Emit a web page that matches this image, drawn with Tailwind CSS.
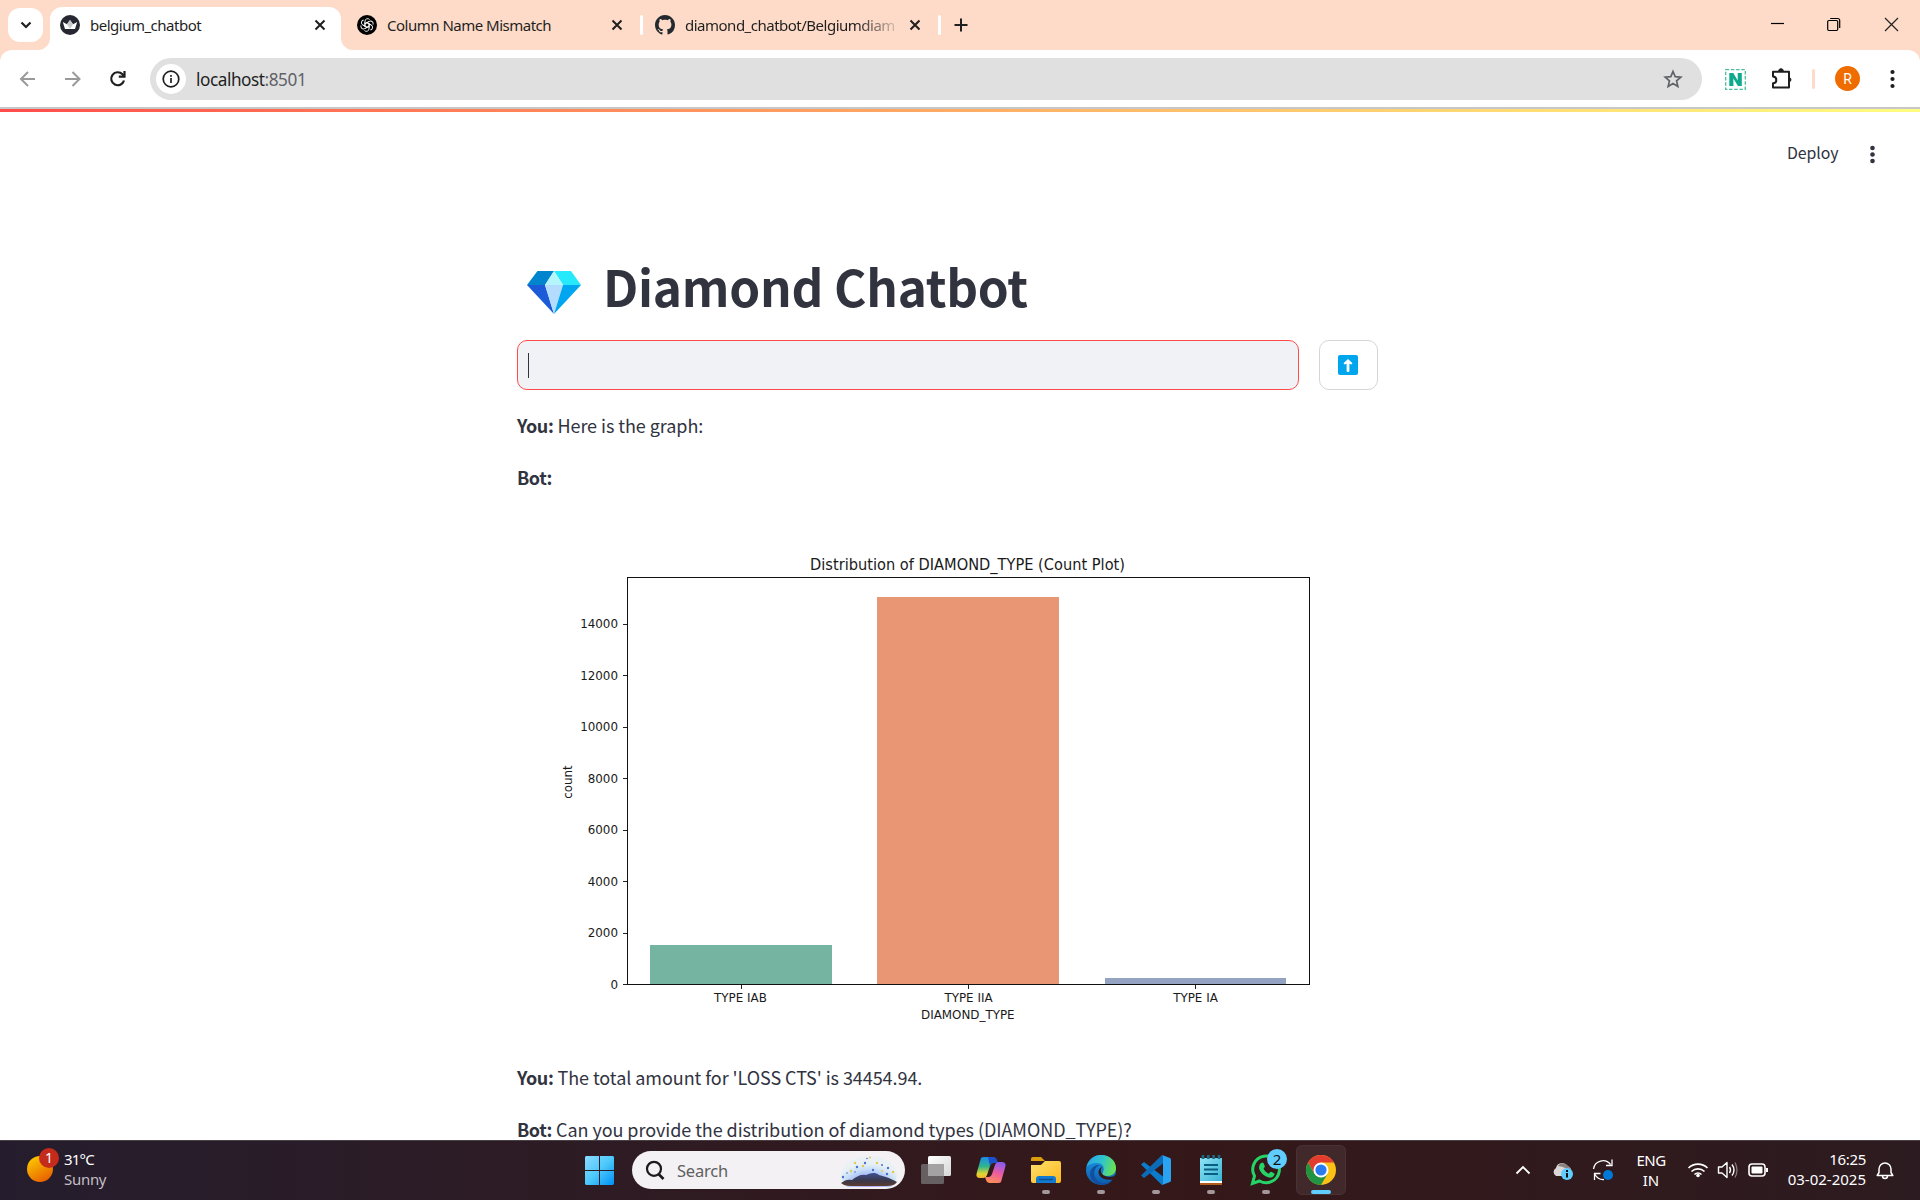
<!DOCTYPE html>
<html lang="en">
<head>
<meta charset="utf-8">
<title>belgium_chatbot</title>
<script src="https://cdn.jsdelivr.net/npm/@tailwindcss/browser@4"></script>
</head>
<body class="flex h-[1200px] w-[1920px] flex-col overflow-hidden bg-white font-['Noto_Sans',sans-serif] text-[#1f1f1f]">

<!-- Tab strip -->
<header class="flex h-[50px] shrink-0 items-start bg-[#fddbc8]">
  <button class="mt-2 ml-2 flex h-[34px] w-[35px] items-center justify-center rounded-[12px] bg-white">
    <svg class="h-4 w-4" viewBox="0 0 16 16" fill="none" stroke="#1f1f1f" stroke-width="2.2"><path d="M3.5 5.5 8 10l4.5-4.5"/></svg>
  </button>
  <div class="relative mt-[7px] ml-[7px] flex h-[43px] w-[291px] items-start rounded-t-[12px] bg-white pt-2 pl-[10px]">
    <svg class="absolute bottom-0 -left-3 h-3 w-3" viewBox="0 0 12 12"><path d="M12 0v12H0A12 12 0 0 0 12 0" fill="#fff"/></svg>
    <svg class="absolute -right-3 bottom-0 h-3 w-3" viewBox="0 0 12 12"><path d="M0 0v12h12A12 12 0 0 1 0 0" fill="#fff"/></svg>
    <svg class="h-5 w-5 shrink-0" viewBox="0 0 20 20"><circle cx="10" cy="10" r="10" fill="#262730"/><path d="M2.800 7 7 9.200 10 5l3 4.200L17.200 7l-2.200 7H5z" fill="#fff"/><path d="M10 5l3 4.200-3 4.600-3-4.600z" fill="#c9c9cd"/></svg>
    <span class="ml-[10px] w-[224px] text-[15px] leading-[20px] whitespace-nowrap"><span class="tracking-[-0.5px]">belgium_chatbot</span></span>
    <svg class="mt-[4px] h-3 w-3 shrink-0" viewBox="0 0 12 12" stroke="#1f1f1f" stroke-width="2"><path d="m1.500 1.500 9 9m0-9-9 9"/></svg>
  </div>
  <div class="mt-[15px] flex w-[300px] items-start pl-4">
    <svg class="h-5 w-5 shrink-0" viewBox="0 0 20 20"><circle cx="10" cy="10" r="10" fill="#000"/><g fill="none" stroke="#fff" stroke-width=".9"><path id="petal" d="M8 11.800V6.200a2.600 2.600 0 0 1 4.600-1.600M8 8.800l3.800-2.200"/><use href="#petal" transform="rotate(60 10 10)"/><use href="#petal" transform="rotate(120 10 10)"/><use href="#petal" transform="rotate(180 10 10)"/><use href="#petal" transform="rotate(240 10 10)"/><use href="#petal" transform="rotate(300 10 10)"/></g></svg>
    <span class="ml-[10px] w-[224px] text-[15px] leading-[20px] whitespace-nowrap"><span class="tracking-[-0.5px]">Column Name Mismatch</span></span>
    <svg class="mt-1 h-3 w-3 shrink-0" viewBox="0 0 12 12" stroke="#1f1f1f" stroke-width="2"><path d="m1.500 1.500 9 9m0-9-9 9"/></svg>
  </div>
  <div class="mt-[15px] -ml-[1px] h-5 w-[3px] rounded bg-white"></div>
  <div class="mt-[15px] flex w-[295px] items-start pl-[12px]">
    <svg class="h-5 w-5 shrink-0" viewBox="0 0 16 16" fill="#24292f"><path d="M8 0C3.580 0 0 3.580 0 8c0 3.540 2.290 6.530 5.470 7.590.4.070.55-.17.55-.38 0-.19-.01-.82-.01-1.490-2.010.37-2.530-.49-2.690-.94-.09-.23-.48-.94-.82-1.130-.28-.15-.68-.52-.01-.53.63-.01 1.080.58 1.230.82.72 1.210 1.870.87 2.330.66.07-.52.28-.87.51-1.070-1.780-.2-3.640-.89-3.640-3.950 0-.87.31-1.590.82-2.150-.08-.2-.36-1.020.08-2.120 0 0 .67-.21 2.200.82.64-.18 1.320-.27 2-.27s1.360.09 2 .27c1.530-1.040 2.200-.82 2.200-.82.44 1.100.16 1.920.08 2.120.51.56.82 1.270.82 2.150 0 3.070-1.870 3.750-3.650 3.950.29.25.54.73.54 1.480 0 1.070-.01 1.930-.01 2.200 0 .21.15.46.55.38A8.010 8.010 0 0 0 16 8c0-4.420-3.580-8-8-8"/></svg>
    <span class="mr-[15px] ml-[10px] w-[209px] bg-linear-to-r from-[#1f1f1f] from-82% to-[#1f1f1f]/20 bg-clip-text text-[15px] leading-[20px] whitespace-nowrap text-transparent"><span class="tracking-[-0.5px]">diamond_chatbot/Belgiumdiam</span></span>
    <svg class="mt-1 h-3 w-3 shrink-0" viewBox="0 0 12 12" stroke="#1f1f1f" stroke-width="2"><path d="m1.500 1.500 9 9m0-9-9 9"/></svg>
  </div>
  <div class="mt-[15px] h-5 w-[3px] rounded bg-white"></div>
  <svg class="mt-[18px] ml-[13px] h-[14px] w-[14px]" viewBox="0 0 14 14" stroke="#1f1f1f" stroke-width="2"><path d="M7 .5v13M.5 7h13"/></svg>
  <div class="mt-[17px] mr-[21px] ml-auto flex gap-[42px]">
    <svg class="h-[15px] w-[15px]" viewBox="0 0 15 15" stroke="#000" stroke-width="1.200"><path d="M1 6.500h13"/></svg>
    <svg class="h-[15px] w-[15px]" viewBox="0 0 15 15" fill="none" stroke="#000" stroke-width="1.200"><rect x=".7" y="3.500" width="10" height="10" rx="1.200"/><path d="M3.200 1.500h7.500a2 2 0 0 1 2 2V11"/></svg>
    <svg class="h-[15px] w-[15px]" viewBox="0 0 15 15" stroke="#222" stroke-width="1.200"><path d="m1 1 13 13m0-13L1 14"/></svg>
  </div>
</header>

<!-- Toolbar -->
<nav class="h-[57px] shrink-0 bg-[#fddbc8]">
  <div class="flex h-full items-start rounded-t-[12px] bg-white pt-2 pl-[18px]">
    <svg class="mt-[11px] h-5 w-5" viewBox="0 0 20 20" fill="none" stroke="#9a9a9a" stroke-width="2"><path d="M17 10H3M10 3l-7 7 7 7"/></svg>
    <svg class="mt-[11px] ml-6 h-5 w-5" viewBox="0 0 20 20" fill="none" stroke="#9a9a9a" stroke-width="2"><path d="M3 10h14.500M10.500 3l7 7-7 7"/></svg>
    <svg class="mt-[11px] ml-[26px] h-5 w-5" viewBox="0 0 20 20" fill="none" stroke="#1f1f1f" stroke-width="2.200"><path d="M16 11.500A6.500 6.500 0 1 1 14.500 5.300l1.500 1.700"/><path d="M16.500 2v5.700h-5.700"/></svg>
    <div class="ml-[22px] flex h-[42px] w-[1552px] items-start rounded-full bg-[#e0e0e0] pl-[6px]">
      <div class="mt-[6px] flex h-[30px] w-[30px] items-center justify-center rounded-full bg-white">
        <svg class="h-[18px] w-[18px]" viewBox="0 0 18 18" fill="none" stroke="#1f1f1f" stroke-width="1.700"><circle cx="9" cy="9" r="7.800"/><path d="M9 8v5M9 5v1.800"/></svg>
      </div>
      <span class="mt-[10px] ml-[10px] text-[17.200px] leading-6 whitespace-nowrap"><span class="tracking-[-0.45px]">localhost<span class="text-[#5f6368]">:8501</span></span></span>
      <svg class="mt-[11px] mr-[19px] ml-auto h-5 w-5" viewBox="0 0 20 20" fill="none" stroke="#5f6368" stroke-width="1.700"><path d="m10 2.500 2.200 5.200 5.600.5-4.250 3.700 1.300 5.500L10 14.500l-4.850 2.900 1.300-5.500L2.200 8.200l5.600-.5z"/></svg>
    </div>
    <svg class="mt-[11px] ml-[23px] h-[21px] w-[21px]" viewBox="0 0 21 21"><rect x=".7" y=".7" width="19.600" height="19.600" fill="none" stroke="#4dbd9f" stroke-width="1.300" stroke-dasharray="3.500 1.700"/><path d="M4.300 17V4h4l4.400 7.500V4h4.100v13h-3.900L8.400 9.500V17z" fill="#0fa98c"/></svg>
    <svg class="mt-[9px] ml-[25px] h-[23px] w-[22px]" viewBox="0 0 22 23" fill="none" stroke="#1f1f1f" stroke-width="2"><path d="M2 4.800h16v15.800H2v-4.300c2.500 0 3.300-1.500 3.300-3.300S4.500 9.500 2 9.500z" stroke-linejoin="round"/><path d="M7.700 4a2.300 2.300 0 0 1 4.600 0zM18.300 10.500a2.300 2.300 0 0 1 0 4.400z" fill="#1f1f1f" stroke-width="1"/></svg>
    <div class="mt-[11px] ml-[19px] h-5 w-[3px] rounded bg-[#fddbc8]"></div>
    <div class="mt-2 ml-5 flex h-[25px] w-[25px] items-center justify-center rounded-full bg-[#ef6c00] font-['Roboto',sans-serif] text-[14px] leading-none text-white">R</div>
    <svg class="mt-[11px] ml-[29px] h-5 w-[7px]" viewBox="0 0 7 20" fill="#1f1f1f"><circle cx="3.500" cy="3" r="2.100"/><circle cx="3.500" cy="10" r="2.100"/><circle cx="3.500" cy="17" r="2.100"/></svg>
  </div>
</nav>
<div class="h-[2px] shrink-0 bg-[#c7c7c7]"></div>

<!-- App -->
<div class="h-[3px] shrink-0 bg-linear-to-r from-[#ff4b4b] to-[#fffd80]"></div>
<main class="h-[1028px] shrink-0 overflow-hidden bg-white font-['Noto_Sans_CJK_SC',sans-serif] text-[#31333f]">
  <div class="flex h-[150px] items-start justify-end pt-[29px] pr-[43px]">
    <span class="w-[52px] text-[15.900px] leading-6 whitespace-nowrap"><span class="tracking-[-0.1px]">Deploy</span></span>
    <svg class="mt-[3px] ml-[30px] h-5 w-[8px]" viewBox="0 0 8 20" fill="#31333f"><circle cx="3.500" cy="4" r="2.300"/><circle cx="3.500" cy="10.500" r="2.300"/><circle cx="3.500" cy="17" r="2.300"/></svg>
  </div>
  <div class="mx-auto w-[886px]">
    <h1 class="flex h-[78px] items-start">
      <svg class="mt-[9px] ml-[10px] h-[43px] w-[54px] shrink-0" viewBox="0 0 54 43"><path d="M10.500 0H27l-9 14H0z" fill="#0084ce"/><path d="M27 0h17l10 14H36z" fill="#26eafc"/><path d="m27 0 9 14H18z" fill="#b4f6fb"/><path d="M0 14h18l9 29z" fill="#1b5bd8"/><path d="M18 14h18l-9 29z" fill="#b4dcfe"/><path d="M36 14h18L27 43z" fill="#00a6f0"/></svg>
      <span class="-mt-[2px] ml-[22px] text-[49.500px] leading-[52px] font-bold whitespace-nowrap"><span class="tracking-[-0.27px]">Diamond Chatbot</span></span>
    </h1>
    <div class="flex gap-5">
      <div class="h-[50px] w-[782px] rounded-[10px] border border-[#ff4b4b] bg-[#f0f2f6] pt-3 pl-[10px]"><div class="h-[25px] w-px bg-[#31333f]"></div></div>
      <button class="flex h-[50px] w-[59px] items-center justify-center rounded-[10px] border border-[#d6d6d9] bg-white pr-px">
        <svg class="h-5 w-5" viewBox="0 0 20 20"><rect width="20" height="20" rx="2" fill="#00a6ed"/><path d="M10 4 5.500 8.300l1.200 1.200 1.900-.8v7.300q0 1 1.400 1t1.400-1V8.700l1.900.8 1.200-1.200z" fill="#fff"/></svg>
      </button>
    </div>
    <div class="mt-[19px] mb-[2px] text-[18px] leading-8 whitespace-nowrap">
      <p class="h-[52px]"><b class="tracking-[-0.4px]">You:</b> <span class="tracking-[-0.06px]">Here is the graph:</span></p>
      <p class="h-[52px]"><b class="tracking-[-0.4px]">Bot:</b></p>
    </div>
    <svg class="h-[546px] w-[886px] font-['DejaVu_Sans',sans-serif] text-[11.900px]" viewBox="517 515 886 546" fill="#1a1a1a">
      <g shape-rendering="crispEdges">
        <path fill="#74b4a0" d="M650 945h182v39H650z"/>
        <path fill="#e99675" d="M877 597h182v387H877z"/>
        <path fill="#95a3c3" d="M1105 978h181v6h-181z"/>
        <path d="M627.500 577.500h682v407h-682z" fill="none" stroke="#111"/>
        <path d="M623 624.500h4M623 675.500h4M623 727.500h4M623 778.500h4M623 830.500h4M623 881.500h4M623 933.500h4M623 984.500h4M741.500 985v4M968.500 985v4M1195.500 985v4" stroke="#222"/>
      </g>
      <text x="810" y="570" textLength="315" lengthAdjust="spacingAndGlyphs" class="text-[15.500px]">Distribution of DIAMOND_TYPE (Count Plot)</text>
      <g text-anchor="end">
        <text x="618" y="628">14000</text><text x="618" y="680">12000</text><text x="618" y="731">10000</text><text x="618" y="783">8000</text><text x="618" y="834">6000</text><text x="618" y="886">4000</text><text x="618" y="937">2000</text><text x="618" y="989">0</text>
      </g>
      <g text-anchor="middle">
        <text x="740.500" y="1002">TYPE IAB</text><text x="968.500" y="1002">TYPE IIA</text><text x="1195.500" y="1002">TYPE IA</text>
        <text x="967.800" y="1019">DIAMOND_TYPE</text>
        <text transform="translate(572 782) rotate(-90)">count</text>
      </g>
    </svg>
    <div class="text-[18px] leading-8 whitespace-nowrap">
      <p class="h-[52px]"><b class="tracking-[-0.4px]">You:</b> <span class="tracking-[-0.06px]">The total amount for 'LOSS CTS' is 34454.94.</span></p>
      <p class="h-[52px]"><b class="tracking-[-0.4px]">Bot:</b> <span class="tracking-[-0.06px]">Can you provide the distribution of diamond types (DIAMOND_TYPE)?</span></p>
    </div>
  </div>
</main>

<!-- Taskbar -->
<footer class="flex h-[60px] shrink-0 items-start border-t border-[#494045] bg-linear-to-r from-[#251d2d] via-[#351819] via-60% to-[#2c1b20] text-[15px] text-white">
  <div class="flex w-[585px] pl-[27px]">
    <div class="relative h-[59px] w-[37px]">
      <svg class="h-[59px] w-[38px] max-w-none" viewBox="27 1141 38 59"><defs><linearGradient id="sun" x1="0" y1="0" x2=".6" y2="1"><stop stop-color="#ffd400"/><stop offset="1" stop-color="#e86400"/></linearGradient></defs><circle cx="40" cy="1169" r="13" fill="url(#sun)"/><circle cx="49" cy="1158" r="10" fill="#c42b1c"/></svg>
      <span class="absolute top-[9px] left-[12px] w-5 text-center text-[14px] leading-4">1</span>
    </div>
    <div class="pt-[8px] leading-5"><div><span class="tracking-[-0.8px]">31°C</span></div><div class="text-[#c3bfc5]"><span class="tracking-[-0.3px]">Sunny</span></div></div>
  </div>
  <svg class="mt-[15px] h-[29px] w-[29px]" viewBox="0 0 29 29"><defs><linearGradient id="win" x1="0" y1="0" x2="1" y2="1"><stop stop-color="#8bdcff"/><stop offset=".5" stop-color="#4cc8fb"/><stop offset="1" stop-color="#0090f5"/></linearGradient></defs><path fill="url(#win)" d="M1 0h13v14H0V1zM15 0h13l1 1v13H15zM0 15h14v14H1l-1-1zM15 15h14v13l-1 1H15z"/></svg>
  <div class="mt-[10px] ml-[18px] flex h-[38px] w-[273px] items-start rounded-full bg-[#f3f1f4]">
    <svg class="mt-[9px] ml-[13px] h-5 w-5" viewBox="0 0 20 20" fill="none" stroke="#1b1b1b" stroke-width="2.200"><circle cx="9" cy="8.800" r="7"/><path d="m13.500 14 5 5" stroke-width="2.600"/></svg>
    <span class="mt-[9px] ml-3 w-[163px] text-[16.500px] leading-[22px] text-[#5f5f5f]"><span class="tracking-[-0.2px]">Search</span></span>
    <svg class="mt-[5px] h-[31px] w-[57px]" viewBox="0 0 57 31"><defs><radialGradient id="glow" cx=".5" cy=".8" r=".62"><stop stop-color="#b7a6f6"/><stop offset=".6" stop-color="#b3caf9"/><stop offset="1" stop-color="#c5f0f8" stop-opacity=".2"/></radialGradient><linearGradient id="hill" x1="0" y1="0" x2="0" y2="1"><stop stop-color="#3d5290"/><stop offset=".6" stop-color="#3b3848"/><stop offset="1" stop-color="#5c3b30"/></linearGradient></defs><ellipse cx="29" cy="19" rx="28" ry="19" fill="url(#glow)"/><path d="M1 27c4-3 7-4 11-3 5-4 9-6 14-5 5-2 9-3 13 0l7 2c4 1 7 3 11 5-2 3-6 4-10 4H11c-5 0-8-1-10-3" fill="url(#hill)"/><g fill="#4a6fd0"><circle cx="25" cy="7" r="1.200"/><circle cx="17" cy="11" r="1.200"/><circle cx="33" cy="14" r="1.200"/><circle cx="42" cy="9" r="1"/><circle cx="48" cy="12" r="1.200"/><circle cx="47" cy="18" r="1.200"/><circle cx="3" cy="21" r="1.200"/><circle cx="15" cy="16" r=".8"/><circle cx="27" cy="2.500" r=".8"/><circle cx="7" cy="17" r=".8"/></g><g fill="#e8c84c"><circle cx="15" cy="7" r="1.200"/><circle cx="23" cy="10" r="1.200"/><circle cx="37" cy="7" r="1.200"/><circle cx="53" cy="16" r="1.300"/><circle cx="11" cy="15" r="1.200"/><circle cx="30" cy="1.500" r="1"/><circle cx="42" cy="15" r="1"/></g></svg>
  </div>
  <svg class="ml-[10px] h-[59px] w-[435px]" viewBox="915 1141 435 59">
    <defs>
      <linearGradient id="tv" x1="0" y1="0" x2="1" y2="1"><stop stop-color="#fff"/><stop offset="1" stop-color="#d6d6d6"/></linearGradient>
      <linearGradient id="cpA" x1="0" y1="0" x2="0" y2="1"><stop stop-color="#1a8ce8"/><stop offset=".45" stop-color="#2fb58c"/><stop offset=".8" stop-color="#e3d531"/><stop offset="1" stop-color="#f4b62c"/></linearGradient>
      <linearGradient id="cpB" x1=".6" y1="0" x2=".3" y2="1"><stop stop-color="#8c5cf0"/><stop offset=".5" stop-color="#ed5c9e"/><stop offset="1" stop-color="#ff9155"/></linearGradient>
      <linearGradient id="fold" x1="0" y1="0" x2="1" y2="1"><stop stop-color="#ffe06d"/><stop offset="1" stop-color="#fcb81c"/></linearGradient>
      <linearGradient id="edA" x1="0" y1=".3" x2="1" y2=".5"><stop stop-color="#2aa5e6"/><stop offset=".5" stop-color="#2fc3cf"/><stop offset="1" stop-color="#6be34c"/></linearGradient>
      <linearGradient id="edB" x1="0" y1="0" x2="0" y2="1"><stop stop-color="#1b9be2"/><stop offset="1" stop-color="#0c5ab0"/></linearGradient>
      <linearGradient id="np" x1="0" y1="0" x2="1" y2="1"><stop stop-color="#8fe3f5"/><stop offset="1" stop-color="#37b3d4"/></linearGradient>
    </defs>
    <rect x="921" y="1164" width="23" height="20" rx="1.500" fill="#666063"/><rect x="928" y="1156" width="23" height="20" rx="1.500" fill="url(#tv)"/><path d="M928 1164h16v12h-16z" fill="#a5a2a3"/>
    <path d="M981 1158q1-1 3-1h8q3 0 4 3l1 3h-4q-2 0-3 3l-3 9q-1 3-4 3h-3q-5 0-3-6z" fill="url(#cpA)"/><path d="M988 1157h5q3 0 4 3l1 3h-5q-2 0-3 3z" fill="#1a50cc"/>
    <path d="M1001 1182q-1 1-3 1h-8q-3 0-4-3l-1-3h4q2 0 3-3l3-9q1-3 4-3h3q5 0 3 6z" fill="url(#cpB)"/>
    <path d="M1031 1159q0-2 2-2h8l4 4h-14z" fill="#dc9f0c"/><path d="M1031 1165h10l4-4h14q2 0 2 2v18q0 2-2 2h-26q-2 0-2-2z" fill="url(#fold)"/><path d="M1036 1183v-4q0-3 3-3h14q3 0 3 3v4z" fill="#127bcf"/><path d="M1039 1179.500h14" stroke="#0c4c90" stroke-width="1.400"/>
    <circle cx="1101" cy="1170" r="15" fill="url(#edB)"/>
    <path d="M1086.500 1167c2-8 8-12 14.500-12 9 0 15 6 15 13 0 5-4 8-8 8-4 0-7-1-5-4 2-4 0-9-6-9-5 0-9 2-10.500 4" fill="url(#edA)"/>
    <path d="M1100 1165c-5 2-7 7-5 12 3 6 11 9 18 2.500-6 8-17 7-22-1-3-8 2-14 9-13.500" fill="#124f9e"/>
    <path d="M1102.500 1166.500c-3 3-2 7.500 2.500 9.500 4 1.700 8 1 10.500-1l-2.500 4.500c-5 1-11 0-13.500-4-2-4-.5-7.500 3-9" fill="#34191b"/>
    <path d="M1141 1164.500l3-2.500 19 14.500v8.500q-1 0-2-1z" fill="#0b7ccb"/><path d="M1141 1175.500l3 2.500 19-14.500v-8.500q-1 0-2 1z" fill="#0a6cb8"/><path d="M1162 1155l8 3q1 .5 1 2v20q0 1.500-1 2l-8 3q1-.5 1-2v-26q0-1.500-1-2" fill="#2aa3f3"/>
    <path d="M1200 1158h22v25h-22z" fill="url(#np)"/><path d="M1200 1181h22v2h-22z" fill="#fff"/><path d="M1200 1183h22v2h-22z" fill="#b05c1c"/><path d="M1204 1165h14M1204 1169.500h14M1204 1174h14" stroke="#0a5f80" stroke-width="1.800"/><path d="M1203 1155v4M1208.300 1155v4M1213.600 1155v4M1219 1155v4" stroke="#1a6a85" stroke-width="2.600"/>
    <path d="m1252.500 1183.500 2-7.500a13.300 13.300 0 1 1 5 5z" fill="none" stroke="#25d366" stroke-width="3"/><path d="M1260 1164q2-2.500 3.500-1l1.300 3q.3 1-1.300 2.700c1.200 2.300 3 4 5.300 5q1.300-2 2.300-2l3 1.500q1 1-.5 2.800c-2 2.500-5 1.800-8 .2s-7-6-6.500-9q0-1.500.9-3.200" fill="#25d366"/>
    <circle cx="1277" cy="1159" r="10" fill="#60cdff"/><text x="1277" y="1164.500" text-anchor="middle" font-size="15" fill="#111">2</text>
    <rect x="1296.500" y="1145.500" width="49" height="49" rx="5" fill="#fff" fill-opacity=".07" stroke="#fff" stroke-opacity=".08"/>
    <circle cx="1321" cy="1170" r="15" fill="#fbc116"/><path d="M1308 1162.500a15 15 0 0 1 26 0h-13l-6.500 11z" fill="#e33b2e"/><path d="M1308 1162.500l6.500 11.300 6.500 3.700v7.500a15 15 0 0 1-13-22.500" fill="#229342"/><path d="M1321 1185l6.500-11.300-6.500 3.800-5-2z" fill="#229342"/><circle cx="1321" cy="1170" r="7.500" fill="#fff"/><circle cx="1321" cy="1170" r="5.600" fill="#2a7bf0"/>
    <g fill="#a3979a"><rect x="1042" y="1190" width="8" height="4" rx="2"/><rect x="1097" y="1190" width="8" height="4" rx="2"/><rect x="1152" y="1190" width="8" height="4" rx="2"/><rect x="1207" y="1190" width="8" height="4" rx="2"/><rect x="1262" y="1190" width="8" height="4" rx="2"/></g><rect x="1311" y="1190" width="20" height="4" rx="2" fill="#60cdff"/>
  </svg>
  <svg class="ml-[160px] h-[59px] w-[110px]" viewBox="1510 1141 110 59" fill="none" stroke="#fff">
    <path d="m1516.500 1173.500 6.500-6.500 6.500 6.500" stroke-width="1.800"/>
    <g stroke="none"><path d="M1556 1176a4.500 4.500 0 0 1 0-8 6 6 0 0 1 11-2q5 1 4 7v3z" fill="#dcd6d6"/><path d="M1558 1166a6 6 0 0 1 10 0q4 2 3 7-4-6-13-7" fill="#8a8282"/><circle cx="1567" cy="1174" r="6" fill="#60cdff"/><path d="M1566 1173h2v4.500h-2zM1566 1170h2v2h-2z" fill="#111"/></g>
    <path d="M1593.500 1169a9.500 9.500 0 0 1 17-4.500M1612 1159.500v6h-6M1594.500 1180v-6.500h6M1595 1174.500a9.500 9.500 0 0 0 9 5" stroke-width="1.300"/><circle cx="1608" cy="1175" r="5" fill="#0078d7" stroke="none"/>
  </svg>
  <div class="ml-[11px] w-10 pt-[9px] text-center leading-5"><div><span class="tracking-[-0.5px]">ENG</span></div><div>IN</div></div>
  <svg class="ml-[9px] h-[59px] w-[100px]" viewBox="1680 1141 100 59" fill="none" stroke="#fff" stroke-width="1.600">
    <path d="M1688.500 1168a13.500 13.500 0 0 1 19 0M1691.500 1171.500a9.300 9.300 0 0 1 13 0M1694.500 1174.500a5.200 5.200 0 0 1 7 0"/><circle cx="1698" cy="1175.500" r="1.800" fill="#fff" stroke="none"/>
    <path d="M1718.500 1167h3.500l5-4.500v15l-5-4.500h-3.500z" stroke-linejoin="round" stroke-width="1.400"/><path d="M1729.500 1167q2 3 0 6M1732 1164.500q4 5.500 0 11" stroke-width="1.400"/><path d="M1735 1162.500q4 7.500 0 15" stroke="#87797a" stroke-width="1.300"/>
    <rect x="1749" y="1164" width="16" height="12" rx="3"/><rect x="1751.500" y="1166.500" width="11" height="7" rx="1" fill="#fff" stroke="none"/><path d="M1767 1168v4" stroke-width="2"/>
  </svg>
  <div class="w-[86px] pt-[8px] text-right leading-5 whitespace-nowrap"><div><span class="tracking-[-0.3px]">16:25</span></div><div><span>03-02-2025</span></div></div>
  <svg class="mt-[19px] ml-[10px] h-5 w-[18px]" viewBox="0 0 18 20" fill="none" stroke="#fff" stroke-width="1.500" stroke-linejoin="round"><path d="M3 9a6 6 0 0 1 12 0v3.500l1.800 3H1.200l1.800-3zM6.500 16a2.500 2.500 0 0 0 5 0"/></svg>
</footer>
</body>
</html>
